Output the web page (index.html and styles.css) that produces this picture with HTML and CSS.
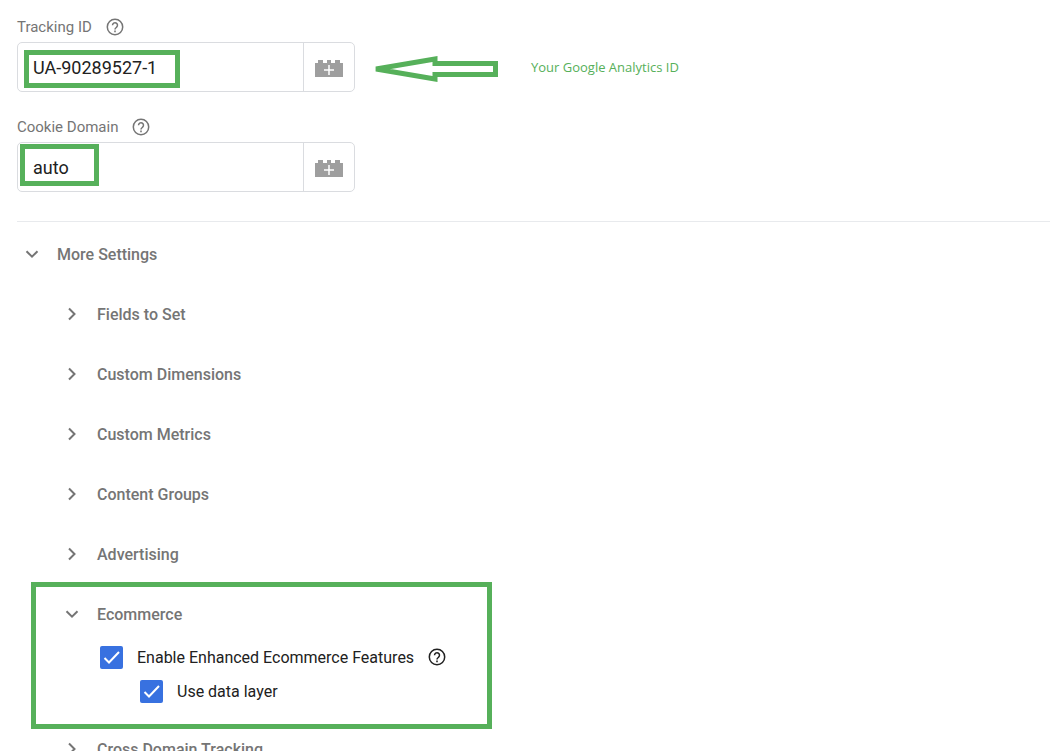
FILE: index.html
```html
<!DOCTYPE html>
<html lang="en">
<head>
    <meta charset="UTF-8">
    <meta name="viewport" content="width=device-width, initial-scale=1.0">
    <title>Google Analytics Settings</title>
    <link rel="stylesheet" href="styles.css">
</head>
<body>
    <!-- shared icons -->
    <svg class="sprite" aria-hidden="true">
        <symbol id="icon-help" viewBox="0 0 18 18">
            <circle cx="9" cy="9" r="7.7" fill="none" stroke="currentColor" stroke-width="1.5"/>
            <path d="M6.5 7.3a2.5 2.5 0 1 1 4.1 1.9C9.6 10 9 10.3 9 11.5" fill="none" stroke="currentColor" stroke-width="1.5"/>
            <path d="M8.2 12.6h1.6v1.6H8.2z" fill="currentColor"/>
        </symbol>
        <symbol id="icon-brick" viewBox="0 0 28 20">
            <path d="M0 6h3V3h5v3h4V3h4v3h4V3h5v3h3v14H0z" fill="#9e9e9e"/>
            <path d="M14 8v10M9 13h10" stroke="#fff" stroke-width="1.5"/>
        </symbol>
        <symbol id="icon-down" viewBox="0 0 14 14">
            <path d="M1.5 4.2L7 9.7l5.5-5.5" fill="none" stroke="currentColor" stroke-width="2"/>
        </symbol>
        <symbol id="icon-right" viewBox="0 0 14 14">
            <path d="M4 1.5L9.500 7L4 12.5" fill="none" stroke="currentColor" stroke-width="2"/>
        </symbol>
    </svg>

    <main class="settings">
        <div class="field-row">
            <div class="field">
                <div class="field-label">
                    <label for="trackingId">Tracking ID</label>
                    <button class="help" type="button" aria-label="Help"><svg><use href="#icon-help"/></svg></button>
                </div>
                <div class="field-control">
                    <input id="trackingId" type="text" value="UA-90289527-1">
                    <button class="variable-btn" type="button" aria-label="Insert variable"><svg><use href="#icon-brick"/></svg></button>
                    <span class="mark mark-tracking"></span>
                </div>
            </div>
            <div class="note">
                <svg class="arrow" viewBox="0 0 126 32">
                    <path d="M3 18L62 8v4.5h60.500v11H62V28z" fill="none" stroke="#56b05a" stroke-width="5"/>
                </svg>
                <span>Your Google Analytics ID</span>
            </div>
        </div>

        <div class="field">
            <div class="field-label">
                <label for="cookieDomain">Cookie Domain</label>
                <button class="help" type="button" aria-label="Help"><svg><use href="#icon-help"/></svg></button>
            </div>
            <div class="field-control">
                <input id="cookieDomain" type="text" value="auto">
                <button class="variable-btn" type="button" aria-label="Insert variable"><svg><use href="#icon-brick"/></svg></button>
                <span class="mark mark-cookie"></span>
            </div>
        </div>

        <section class="more">
            <button class="section-btn" type="button" aria-expanded="true"><svg><use href="#icon-down"/></svg>More Settings</button>
            <div class="sub-sections">
                <button class="section-btn" type="button"><svg><use href="#icon-right"/></svg>Fields to Set</button>
                <button class="section-btn" type="button"><svg><use href="#icon-right"/></svg>Custom Dimensions</button>
                <button class="section-btn" type="button"><svg><use href="#icon-right"/></svg>Custom Metrics</button>
                <button class="section-btn" type="button"><svg><use href="#icon-right"/></svg>Content Groups</button>
                <button class="section-btn" type="button"><svg><use href="#icon-right"/></svg>Advertising</button>
                <div class="ecommerce">
                    <button class="section-btn" type="button" aria-expanded="true"><svg><use href="#icon-down"/></svg>Ecommerce</button>
                    <div class="checks">
                        <div class="check-row">
                            <input id="enhanced" type="checkbox" checked>
                            <label for="enhanced">Enable Enhanced Ecommerce Features</label>
                            <button class="help help-dark" type="button" aria-label="Help"><svg><use href="#icon-help"/></svg></button>
                        </div>
                        <div class="check-row check-nested">
                            <input id="dataLayer" type="checkbox" checked>
                            <label for="dataLayer">Use data layer</label>
                        </div>
                    </div>
                    <span class="mark mark-ecommerce"></span>
                </div>
                <button class="section-btn" type="button"><svg><use href="#icon-right"/></svg>Cross Domain Tracking</button>
            </div>
        </section>
    </main>
</body>
</html>
```
FILE: styles.css
```css
:root {
    --green: #56b05a;
    --blue: #3871e0;
    --grey: #757575;
    --border: #dadce0;
}

* {
    margin: 0;
    padding: 0;
    box-sizing: border-box;
}

body {
    font-family: Roboto, "Liberation Sans", sans-serif;
    font-size: 16px;
    color: #212121;
    background: #fff;
}

button {
    font: inherit;
    color: inherit;
    background: none;
    border: none;
    cursor: pointer;
}

svg {
    display: block;
}

.sprite {
    display: none;
}

.settings {
    padding: 12px 0 0 17px;
}

.field-row {
    display: flex;
    align-items: flex-end;
    gap: 18px;
}

.field {
    width: 338px;
    margin-bottom: 20px;
}

.field-label {
    display: flex;
    align-items: center;
    gap: 14px;
    height: 30px;
    font-size: 15px;
    color: var(--grey);
}

.help svg {
    width: 18px;
    height: 18px;
}

.help-dark {
    color: #212121;
}

.field-control {
    position: relative;
    display: flex;
    height: 50px;
    border: 1px solid var(--border);
    border-radius: 5px;
}

.field-control input {
    flex: 1;
    min-width: 0;
    padding: 0 15px;
    font: inherit;
    font-size: 18px;
    color: inherit;
    background: none;
    border: none;
    outline: none;
}

.variable-btn {
    display: flex;
    align-items: center;
    justify-content: center;
    width: 51px;
    border-left: 1px solid var(--border);
}

.variable-btn svg {
    width: 28px;
    height: 20px;
}

/* green highlight frames */
.mark {
    position: absolute;
    border: 5px solid var(--green);
    pointer-events: none;
}

.mark-tracking {
    top: 7px;
    left: 6px;
    width: 156px;
    height: 38px;
}

.mark-cookie {
    top: 1px;
    left: 2px;
    width: 79px;
    height: 42px;
}

.mark-ecommerce {
    top: -2px;
    left: -26px;
    width: 461px;
    height: 147px;
}

.note {
    display: flex;
    align-items: center;
    gap: 32px;
    height: 50px;
    margin-bottom: 20px;
    font-family: "Open Sans", "Noto Sans", sans-serif;
    font-size: 13px;
    color: var(--green);
}

.arrow {
    width: 126px;
    height: 32px;
}

.more {
    margin-top: 29px;
    padding-top: 2px;
    border-top: 1px solid #e8eaed;
}

.section-btn {
    display: flex;
    align-items: center;
    gap: 18px;
    width: 100%;
    height: 60px;
    padding-left: 8px;
    font-weight: 500;
    color: var(--grey);
    text-align: left;
}

.section-btn svg {
    width: 14px;
    height: 14px;
}

.sub-sections {
    padding-left: 40px;
}

.ecommerce {
    position: relative;
    height: 135px;
}

.checks {
    margin-top: -4px;
}

.check-row {
    display: flex;
    align-items: center;
    height: 34px;
    padding-left: 43px;
}

.check-nested {
    padding-left: 83px;
}

.check-row label {
    margin: 0 14px;
}

.check-row input {
    appearance: none;
    width: 23px;
    height: 23px;
    border-radius: 2px;
    background: var(--blue) url("data:image/svg+xml,%3Csvg xmlns='http://www.w3.org/2000/svg' viewBox='0 0 23 23'%3E%3Cpath d='M4.5 12l4.5 4.5L19 6' fill='none' stroke='%23fff' stroke-width='2'/%3E%3C/svg%3E");
}
```
